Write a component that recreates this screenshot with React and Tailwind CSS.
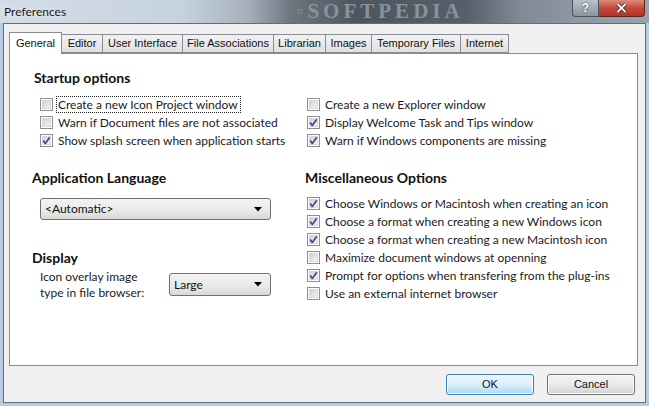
import React from "react";

const body = { fontFamily: "Lato, 'Open Sans', sans-serif" };
const sys = { fontFamily: "'Liberation Sans', Arial, sans-serif" };

function Box({ checked }) {
  return (
    <svg width="13" height="13" viewBox="0 0 13 13" className="shrink-0">
      <defs>
        <linearGradient id="cbg" x1="0" y1="0" x2="1" y2="1">
          <stop offset="0" stopColor="#cfd0d2" />
          <stop offset="1" stopColor="#f4f4f4" />
        </linearGradient>
      </defs>
      <rect x="0.5" y="0.5" width="12" height="12" fill="#ffffff" stroke="#8e8f8f" />
      <rect x="2.5" y="2.5" width="8" height="8" fill="url(#cbg)" stroke="#d6d8db" />
      {checked && (
        <path d="M3.2 6.6 L5.3 9.4 L9.8 3.2" fill="none" stroke="#3a4a8e" strokeWidth="1.7" strokeLinejoin="round" />
      )}
    </svg>
  );
}

function Check({ checked, label, focus }) {
  return (
    <div className="flex items-center h-[18px] gap-[5px]">
      <Box checked={checked} />
      <span
        className={
          "text-[12px] leading-[15px] text-[#1b1b1b] whitespace-nowrap " +
          (focus ? "outline-1 outline-dotted outline-[#222] -ml-[1px] pl-[1px] pr-[2px]" : "")
        }
      >
        {label}
      </span>
    </div>
  );
}

function Select({ value, className }) {
  return (
    <div
      className={
        "flex items-center justify-between rounded-[3px] border border-[#707070] bg-gradient-to-b from-[#f3f3f3] via-[#ebebeb] to-[#d9d9d9] pl-[4px] pr-[8px] " +
        className
      }
    >
      <span className="text-[12px] text-[#111]">{value}</span>
      <svg width="8" height="5" viewBox="0 0 8 5">
        <path d="M0 0 H8 L4 4.5 Z" fill="#000" />
      </svg>
    </div>
  );
}

const tabs = [
  ["General", 53],
  ["Editor", 41],
  ["User Interface", 80],
  ["File Associations", 91],
  ["Librarian", 52],
  ["Images", 46],
  ["Temporary Files", 89],
  ["Internet", 48],
];

const head = "h-[17px] text-[14px] font-bold text-[#111] leading-[17px] whitespace-nowrap";

export default function App() {
  return (
    <div
      className="w-[649px] h-[406px] overflow-hidden relative flex flex-col bg-[#b6cbe0]"
      style={body}
    >
      {/* title bar */}
      <div className="h-[23px] shrink-0 relative bg-[linear-gradient(90deg,#d3dde7_0%,#c6d2de_28%,#a6b1bc_38%,#6c757e_45%,#4c565f_55%,#56606a_72%,#7f8a95_80%,#8e9aa6_90%,#96a4b1_100%)]">
        <span className="absolute left-[4px] top-[3px] text-[12px] text-[#1a1a1a] [text-shadow:0_0_6px_#ffffff]">
          Preferences
        </span>
        <span
          className="absolute left-[296px] top-[1px] text-[21px] leading-[21px] tracking-[4px] text-[#8a9299] font-bold"
          style={{ fontFamily: "'Liberation Serif', serif" }}
        >
          ◦SOFTPEDIA
        </span>
        <div className="absolute left-[572px] top-0 w-[27px] h-[17px] rounded-bl-[4px] border border-t-0 border-[#4b545c] bg-gradient-to-b from-[#b8c2cb] to-[#8a959f] flex items-center justify-center">
          <span className="text-[12px] font-bold text-white [text-shadow:0_0_2px_#333] leading-none" style={sys}>?</span>
        </div>
        <div className="absolute left-[599px] top-0 w-[46px] h-[17px] rounded-br-[4px] border border-t-0 border-l-0 border-[#5a2520] bg-gradient-to-b from-[#e08b7d] via-[#c7483a] to-[#b33224] flex items-center justify-center">
          <svg width="11" height="10" viewBox="0 0 11 10">
            <path d="M1.5 1 L9.5 9 M9.5 1 L1.5 9" stroke="#3a1a16" strokeWidth="3.4" />
            <path d="M1.5 1 L9.5 9 M9.5 1 L1.5 9" stroke="#ffffff" strokeWidth="1.8" />
          </svg>
        </div>
      </div>

      {/* client */}
      <div className="flex-1 flex px-[3px] pb-[3px]">
        <div className="flex-1 border border-[#646c75] bg-[#f0f0f0] flex flex-col pl-[5px] pt-[8px]">
          {/* tabs */}
          <div className="flex h-[21px] items-end relative z-10" style={sys}>
            {tabs.map(([t, w], i) =>
              i === 0 ? (
                <div
                  key={t}
                  style={{ width: w }}
                  className="h-[22px] -mb-[1px] bg-white border border-b-0 border-[#898c95] flex items-center justify-center text-[11px] text-[#111] pb-[1px]"
                >
                  {t}
                </div>
              ) : (
                <div
                  key={t}
                  style={{ width: w }}
                  className="h-[19px] bg-gradient-to-b from-[#f2f2f2] to-[#e1e1e1] border border-l-0 border-[#898c95] flex items-center justify-center text-[11px] text-[#111]"
                >
                  {t}
                </div>
              )
            )}
          </div>
          {/* panel */}
          <div className="w-[629px] h-[313px] bg-white border border-[#898c95] grid grid-cols-[272px_1fr]">
            {/* left column */}
            <div className="pl-[22px] flex flex-col">
              <div className={"mt-[15px] ml-[2px] " + head}>Startup options</div>
              <div className="mt-[9px] pl-[8px] flex flex-col">
                <Check label="Create a new Icon Project window" focus />
                <Check label="Warn if Document files are not associated" />
                <Check label="Show splash screen when application starts" checked />
              </div>
              <div className={"mt-[20px] " + head}>Application Language</div>
              <Select value="<Automatic>" className="mt-[12px] ml-[8px] w-[231px] h-[22px]" />
              <div className={"mt-[29px] " + head}>Display</div>
              <div className="mt-[3px] pl-[8px] flex items-start">
                <div className="text-[12px] leading-[16px] text-[#1b1b1b] w-[129px]">
                  Icon overlay image
                  <br />
                  type in file browser:
                </div>
                <Select value="Large" className="mt-[4px] w-[102px] h-[23px] pl-[3px]" />
              </div>
            </div>
            {/* right column */}
            <div className="pl-[23px] flex flex-col">
              <div className="mt-[41px] pl-[2px] flex flex-col">
                <Check label="Create a new Explorer window" />
                <Check label="Display Welcome Task and Tips window" checked />
                <Check label="Warn if Windows components are missing" checked />
              </div>
              <div className={"mt-[20px] " + head}>Miscellaneous Options</div>
              <div className="mt-[8px] pl-[2px] flex flex-col">
                <Check label="Choose Windows or Macintosh when creating an icon" checked />
                <Check label="Choose a format when creating a new Windows icon" checked />
                <Check label="Choose a format when creating a new Macintosh icon" checked />
                <Check label="Maximize document windows at openning" />
                <Check label="Prompt for options when transfering from the plug-ins" checked />
                <Check label="Use an external internet browser" />
              </div>
            </div>
          </div>
          {/* buttons */}
          <div className="flex justify-end gap-[13px] pr-[10px] mt-[8px]" style={sys}>
            <button className="w-[88px] h-[21px] rounded-[3px] border border-[#3c7fb1] bg-gradient-to-b from-[#eaf6fd] via-[#d9f0fc] to-[#a7d9f5] text-[11px] text-[#111] shadow-[inset_0_0_0_1px_#ffffff]">
              OK
            </button>
            <button className="w-[88px] h-[21px] rounded-[3px] border border-[#707070] bg-gradient-to-b from-[#f2f2f2] via-[#ebebeb] to-[#d1d1d1] text-[11px] text-[#111] shadow-[inset_0_0_0_1px_#fcfcfc]">
              Cancel
            </button>
          </div>
        </div>
      </div>
    </div>
  );
}
